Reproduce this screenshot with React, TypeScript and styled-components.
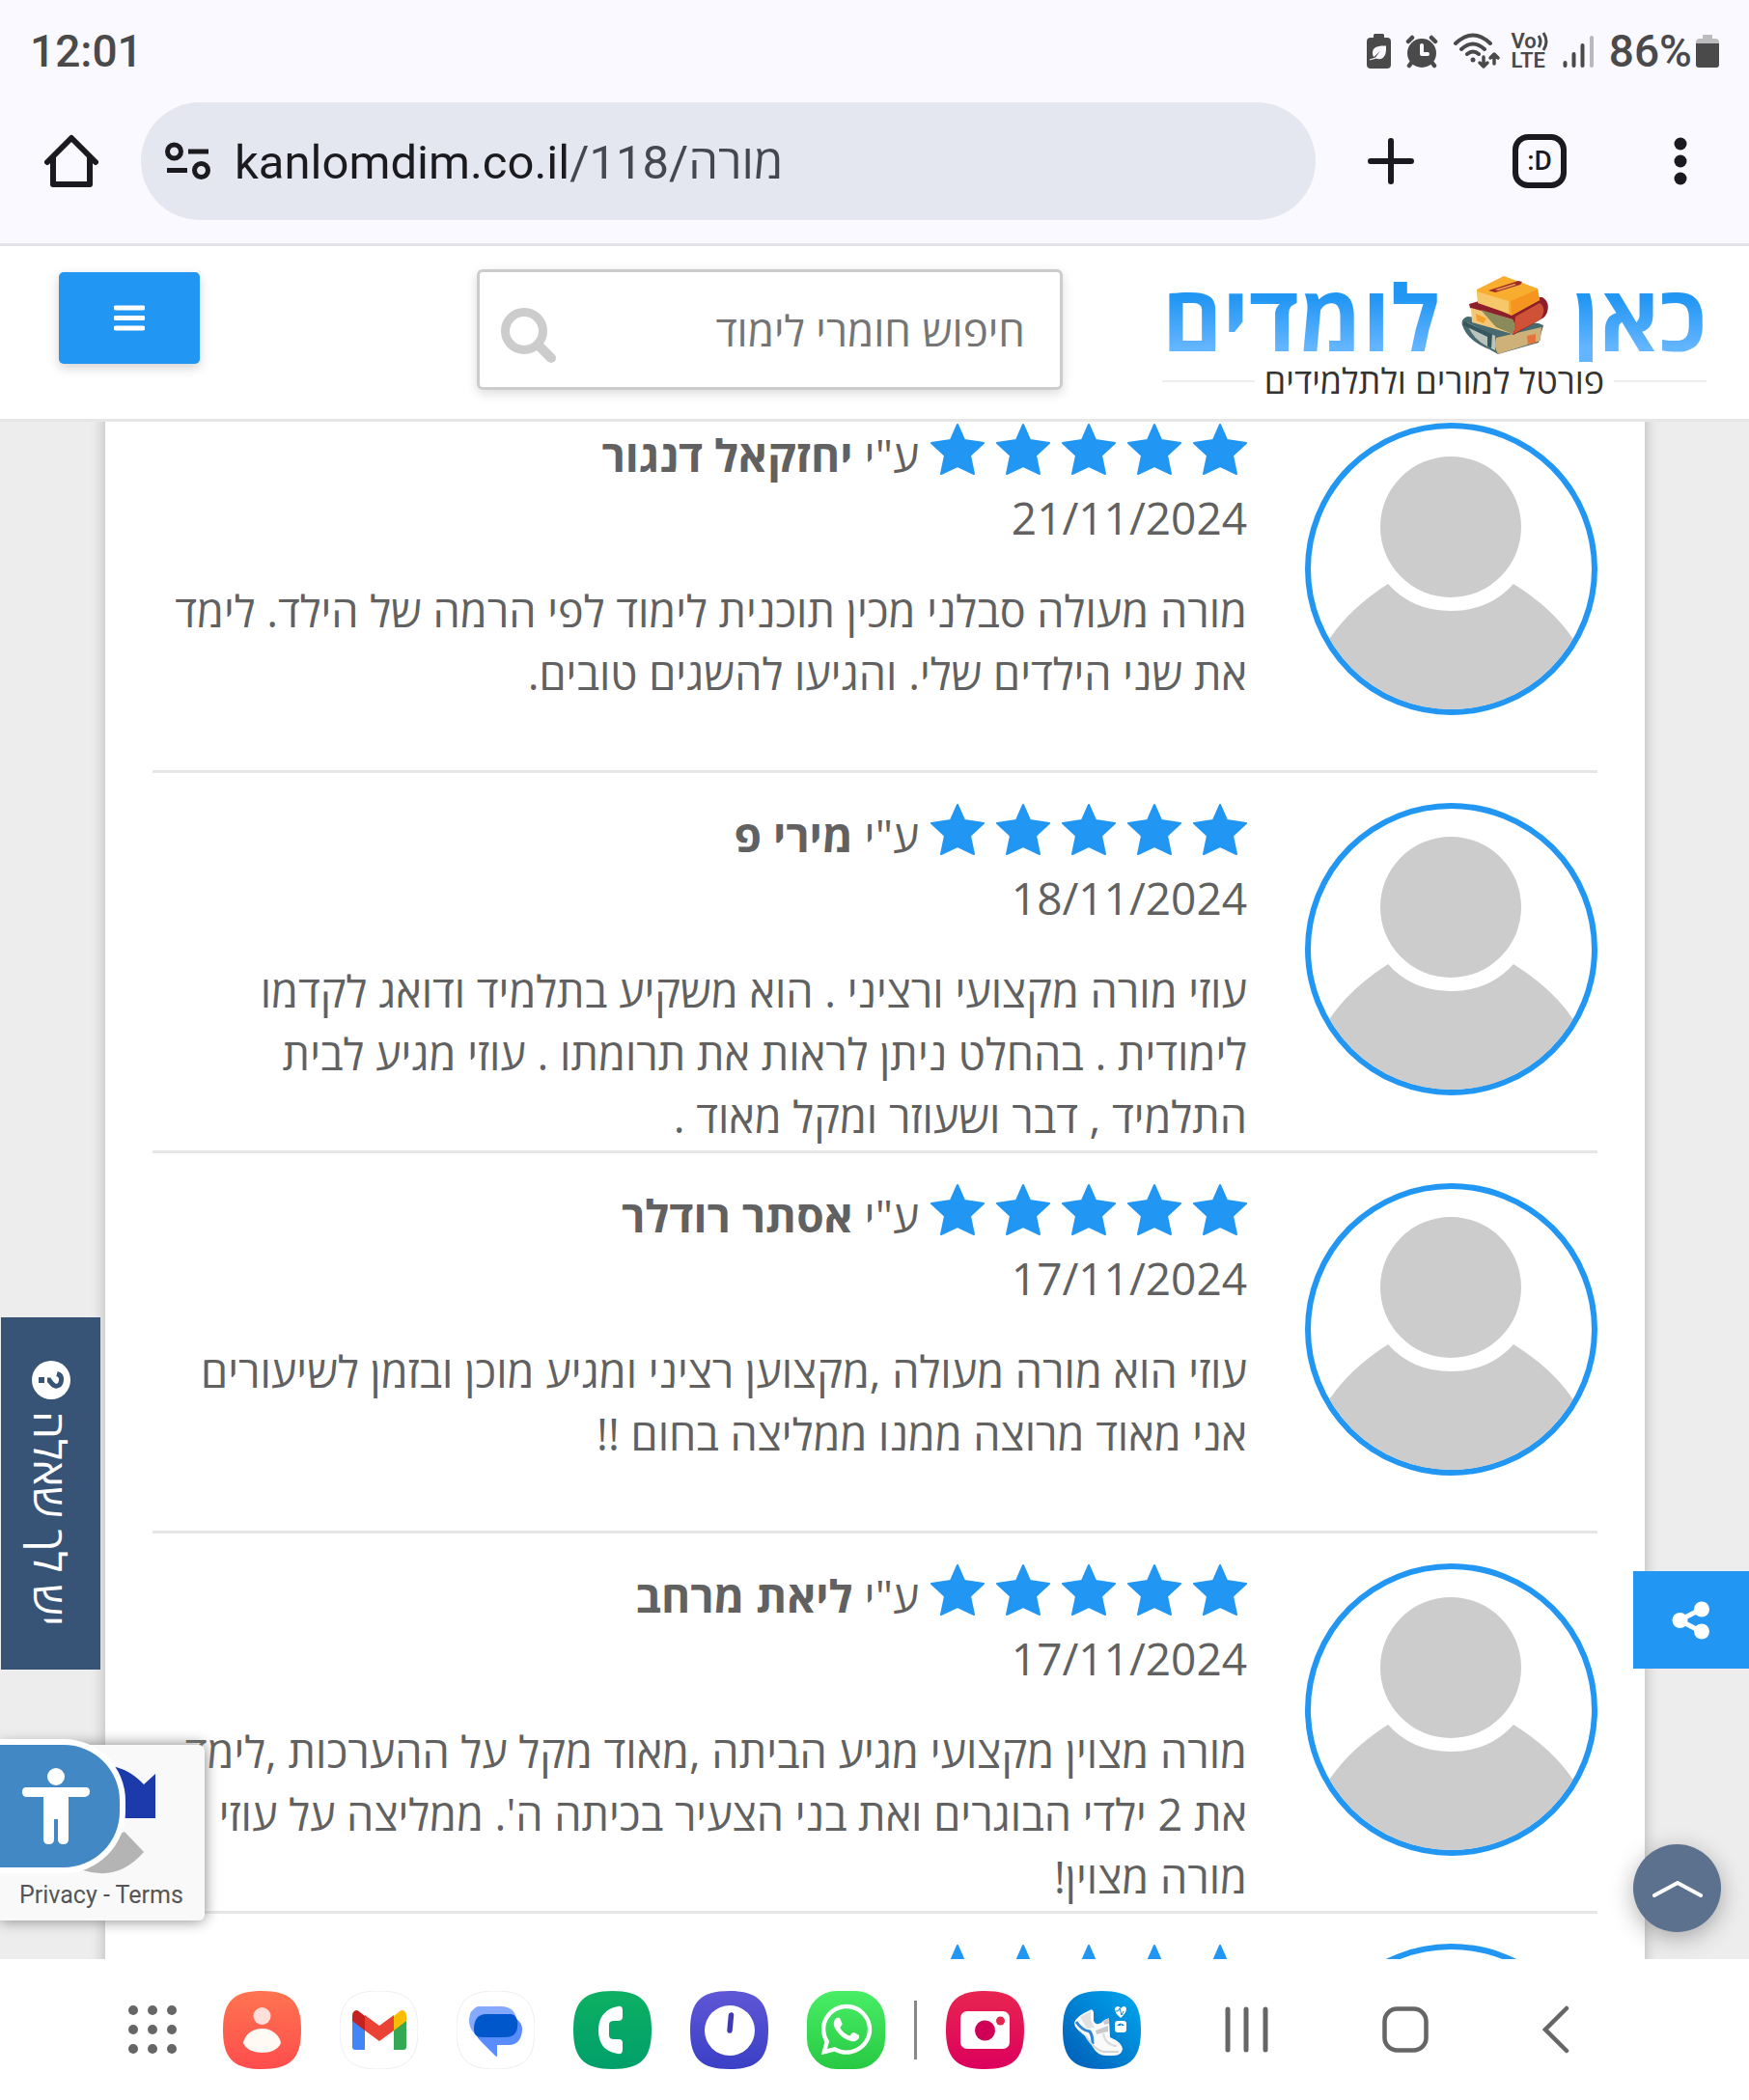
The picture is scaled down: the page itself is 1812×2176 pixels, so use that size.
import React from 'react'
import { FaWhatsapp } from 'react-icons/fa'
import styled, { createGlobalStyle } from 'styled-components'

const reviews = [
  {
    name: 'יחזקאל דנגור',
    date: '21/11/2024',
    text: 'מורה מעולה סבלני מכין תוכנית לימוד לפי הרמה של הילד. לימד את שני הילדים שלי. והגיעו להשגים טובים.',
  },
  {
    name: 'מירי פ',
    date: '18/11/2024',
    text: 'עוזי מורה מקצועי ורציני . הוא משקיע בתלמיד ודואג לקדמו לימודית . בהחלט ניתן לראות את תרומתו . עוזי מגיע לבית התלמיד , דבר ושעוזר ומקל מאוד .',
  },
  {
    name: 'אסתר רודלר',
    date: '17/11/2024',
    text: 'עוזי הוא מורה מעולה ,מקצוען רציני ומגיע מוכן ובזמן לשיעורים אני מאוד מרוצה ממנו ממליצה בחום !!',
  },
  {
    name: 'ליאת מרחב',
    date: '17/11/2024',
    text: "מורה מצוין מקצועי מגיע הביתה ,מאוד מקל על ההערכות ,לימד את 2 ילדי הבוגרים ואת בני הצעיר בכיתה ה'. ממליצה על עוזי מורה מצוין!",
  },
  { name: '', date: '', text: '' },
]

const tilePath =
  'M40.5 0C70 0 81 11 81 40.5S70 81 40.5 81 0 70 0 40.5 11 0 40.5 0Z'

function StatusBar() {
  return (
    <StatusRow>
      <StatusText>12:01</StatusText>
      <StatusIcons>
        <svg width="25" height="36" viewBox="0 0 25 36">
          <path
            fill="#4a4a4a"
            d="M7 4V1.500Q7 0 8.500 0H16.500Q18 0 18 1.500V4H21Q25 4 25 8V32Q25 36 21 36H4Q0 36 0 32V8Q0 4 4 4Z"
          />
          <path
            fill="#faf9ff"
            d="M20 12.500C11 12 6 14 6 20C6 22 6.500 23 7.500 24L14 17.500L9 24.500L3 26.500V27.500C9 26 9 25.500 11 26C18 27 20.500 22 20 12.500Z"
          />
        </svg>
        <svg width="34" height="36" viewBox="0 0 34 36">
          <circle cx="17" cy="20" r="15" fill="#4a4a4a" />
          <g stroke="#4a4a4a" strokeWidth="4.500" strokeLinecap="round">
            <path d="M3 8L7 4M27 4L31 8M7 29L4 33M27 29L30 33" />
          </g>
          <path
            d="M17 12V21H23"
            stroke="#faf9ff"
            strokeWidth="4"
            fill="none"
            strokeLinecap="round"
            strokeLinejoin="round"
          />
        </svg>
        <svg width="50" height="38" viewBox="0 0 50 38">
          <g
            stroke="#4a4a4a"
            strokeWidth="4"
            fill="none"
            strokeLinecap="round"
            strokeLinejoin="round"
          >
            <path d="M3 11Q21 -6 39 11M9 17Q21 6 33 17M15 22Q21 17 27 22" />
            <path
              strokeWidth="3.500"
              d="M32 25V35M28 31L32 35L36 31M43 32V22M39 26L43 22L47 26"
            />
          </g>
          <circle cx="21" cy="28" r="2.500" fill="#4a4a4a" />
        </svg>
        <Volte>
          <span>
            Vo
            <svg width="12" height="20" viewBox="0 0 12 20">
              <path
                d="M2 4Q6 10 2 16M7 1Q13 10 7 19"
                stroke="#4a4a4a"
                strokeWidth="3"
                fill="none"
              />
            </svg>
          </span>
          <span>LTE</span>
        </Volte>
        <svg width="33" height="36" viewBox="0 0 33 36">
          <g stroke="#4a4a4a" strokeWidth="4" strokeLinecap="round">
            <path d="M2.500 30V33M11.500 21V33M20.500 12V33" />
            <path d="M30 4V33" stroke="#b9b9bd" />
          </g>
        </svg>
        <BatteryGroup>
          <StatusText>86%</StatusText>
          <svg width="24" height="36" viewBox="0 0 24 36">
            <path fill="#bcbcbf" d="M7 5V2Q7 1 8 1H16Q17 1 17 2V5H20Q24 5 24 9V11H0V9Q0 5 4 5Z" />
            <path fill="#4a4a4a" d="M0 10H24V32Q24 35 21 35H3Q0 35 0 32Z" />
          </svg>
        </BatteryGroup>
      </StatusIcons>
    </StatusRow>
  )
}

function BrowserBar() {
  return (
    <BrowserRow>
      <IconButton aria-label="Home">
        <svg width="56" height="56" viewBox="0 0 56 56">
          <path
            d="M3 29L28 4L53 29M9 24V52H47V24"
            fill="none"
            stroke="#1b1b1f"
            strokeWidth="6"
            strokeLinejoin="round"
            strokeLinecap="round"
          />
        </svg>
      </IconButton>
      <UrlBar>
        <svg width="48" height="40" viewBox="0 0 48 40">
          <g fill="none" stroke="#1b1b1f" strokeWidth="5">
            <circle cx="9.500" cy="10" r="7" />
            <circle cx="37.500" cy="29.500" r="7" />
            <path d="M24 10H45M2 29.500H23" />
          </g>
        </svg>
        <UrlText href="#">
          kanlomdim.co.il<UrlPath>/118/מורה</UrlPath>
        </UrlText>
      </UrlBar>
      <IconButton aria-label="New tab">
        <svg width="48" height="48" viewBox="0 0 48 48">
          <path
            d="M24 3V45M3 24H45"
            stroke="#1b1b1f"
            strokeWidth="6"
            strokeLinecap="round"
          />
        </svg>
      </IconButton>
      <TabSwitch aria-label="Tabs">:D</TabSwitch>
      <IconButton aria-label="Menu">
        <svg width="14" height="50" viewBox="0 0 14 50">
          <circle cx="7" cy="7" r="6.500" fill="#1b1b1f" />
          <circle cx="7" cy="25" r="6.500" fill="#1b1b1f" />
          <circle cx="7" cy="43" r="6.500" fill="#1b1b1f" />
        </svg>
      </IconButton>
    </BrowserRow>
  )
}

function Books() {
  return (
    <svg width="98" height="86" viewBox="16 7 98 86">
      <path fill="#47696f" d="M19 60Q17 54 24 51L98 58L103 60L98 78L56 90L47 85Q24 76 19 60Z" />
      <path fill="#b9c4bd" d="M24 57L53 71V86Q28 76 24 57Z" />
      <path fill="#35565c" d="M21 56L50 69L49 84L45 82V72L20 60Z" />
      <path fill="#cdb178" d="M54 73L101 62L100 76L56 90Q51 82 54 73Z" />
      <path fill="#e5743b" d="M86 71L95 69V78L87 80Z" />
      <path fill="#8c1f2b" d="M26 38L52 30L102 31Q110 36 107 46Q106 51 100 54L72 70L27 42Z" />
      <path fill="#cf5236" d="M74 51L99 37Q107 42 100 54L72 69Z" />
      <path fill="#f3c778" d="M28 42L71 54Q75 60 71 69L29 57Z" />
      <path fill="#8b8a5a" d="M38 44L71 54Q75 60 71 69L54 62Z" />
      <path fill="#f6a02c" d="M33 48L44 53L41 58L34 55Z" />
      <path fill="#f8ad2f" d="M34 23L62 9L97 22L99 34L70 50L35 34Z" />
      <path fill="#f6c869" d="M34 25L67 35V48L35 37Z" />
      <path fill="#f5941f" d="M69 35L97 23L99 34L70 49Z" />
      <path fill="#9e2b28" d="M46 24L77 14L81 15L79 18L53 26Z" />
      <path fill="#e89a55" d="M53 23L73 17L75 18L56 24Z" />
    </svg>
  )
}

function SiteHeader() {
  return (
    <HeaderRow>
      <MenuButton aria-label="תפריט">
        <svg width="32" height="27" viewBox="0 0 32 27">
          <path d="M2 3H30M2 13.500H30M2 24H30" stroke="#fff" strokeWidth="5" strokeLinecap="round" />
        </svg>
      </MenuButton>
      <SearchBox>
        <svg width="58" height="58" viewBox="0 0 58 58">
          <circle cx="24" cy="24" r="19.500" fill="none" stroke="#ccc" strokeWidth="9" />
          <path d="M40 40L52 52" stroke="#ccc" strokeWidth="10" strokeLinecap="round" />
        </svg>
        <SearchInput dir="rtl" aria-label="חיפוש" placeholder="חיפוש חומרי לימוד" />
      </SearchBox>
      <Logo href="#">
        <LogoWords dir="rtl">
          <LogoWord>כאן</LogoWord>
          <Books />
          <LogoWord>לומדים</LogoWord>
        </LogoWords>
        <Tagline>
          <span>פורטל למורים ולתלמידים</span>
        </Tagline>
      </Logo>
    </HeaderRow>
  )
}

function Avatar() {
  return (
    <AvatarRing>
      <svg width="100%" height="100%" viewBox="0 0 291 291">
        <circle cx="145" cy="102" r="73" fill="#ccc" />
        <path
          fill="#ccc"
          d="M80 161Q105 189 145 189Q185 189 210 161Q250 186 271 217Q282 235 291 260V291H0V260Q8 235 20 217Q41 186 80 161Z"
        />
      </svg>
    </AvatarRing>
  )
}

function Stars() {
  return (
    <StarRow>
      {[1, 2, 3, 4, 5].map((n) => (
        <svg key={n} width="56" height="54" viewBox="0 0 56 54">
          <path
            fill="#2196f3"
            stroke="#2196f3"
            strokeWidth="2"
            strokeLinejoin="round"
            d="M28 2L35 18L55 21L41 34L45 53L28 45L11 53L15 34L1 21L21 18Z"
          />
        </svg>
      ))}
    </StarRow>
  )
}

function Review({ name, date, text }: { name: string; date: string; text: string }) {
  return (
    <ReviewRow>
      <Avatar />
      <ReviewBody>
        <Stars />
        {name && (
          <>
            {' '}
            ע"י <b>{name}</b>
            <div>{date}</div>
            <ReviewText>{text}</ReviewText>
          </>
        )}
      </ReviewBody>
    </ReviewRow>
  )
}

function Floating() {
  return (
    <>
      <AskTab>
        יש לך שאלה
        <svg width="40" height="40" viewBox="0 0 40 40">
          <circle cx="20" cy="20" r="20" fill="#fff" />
          <g transform="rotate(90 20 20)">
            <path
              d="M13.500 14Q15 9 20 9.500Q27 10 26 16Q25 19 20 22V24"
              fill="none"
              stroke="#375375"
              strokeWidth="5"
            />
            <rect x="17" y="27" width="6" height="6" fill="#375375" />
          </g>
        </svg>
      </AskTab>
      <Captcha>
        <svg width="120" height="96" viewBox="0 0 120 96">
          <path fill="#1c3aa9" d="M50 8Q85 4 107 28L119 17V63H50Z" />
          <path fill="#b4b4b4" d="M87 77L107 98Q72 138 22 106Z" />
        </svg>
        <CaptchaLinks>
          <a href="#">Privacy</a> - <a href="#">Terms</a>
        </CaptchaLinks>
      </Captcha>
      <AccessButton aria-label="נגישות">
        <svg width="70" height="80" viewBox="0 0 70 80">
          <circle cx="35" cy="9" r="9" fill="#fff" />
          <path
            fill="#fff"
            d="M4 20H66Q70 20 70 24.500T65 30H48V74Q48 79 42.500 79T37 74V53H33V74Q33 79 27.500 79T22 74V30H5Q0 30 0 25T4 20Z"
          />
        </svg>
      </AccessButton>
      <ShareButton aria-label="שיתוף">
        <svg width="40" height="40" viewBox="0 0 40 40">
          <path d="M31 8L8 20L31 32" fill="none" stroke="#fff" strokeWidth="5" />
          <circle cx="31" cy="8.500" r="8" fill="#fff" />
          <circle cx="8.500" cy="20" r="8" fill="#fff" />
          <circle cx="31" cy="31.500" r="8" fill="#fff" />
        </svg>
      </ShareButton>
      <TopButton aria-label="למעלה">
        <svg width="52" height="18" viewBox="0 0 52 18">
          <path
            d="M2 16L26 3L50 16"
            fill="none"
            stroke="#fff"
            strokeWidth="4"
            strokeLinecap="round"
          />
        </svg>
      </TopButton>
    </>
  )
}

function Dock() {
  return (
    <DockRow>
      <Apps>
        <DockButton aria-label="Apps">
          <svg width="58" height="50" viewBox="0 0 58 50">
            {[5, 25, 45].map((x) =>
              [5, 25, 45].map((y) => (
                <circle key={`${x}-${y}`} cx={x} cy={y} r="5" fill="#666" />
              )),
            )}
          </svg>
        </DockButton>
        <DockButton aria-label="Contacts">
          <svg width="81" height="81" viewBox="0 0 81 81">
            <defs>
              <linearGradient id="contacts" x2="0" y2="1">
                <stop stopColor="#ff7450" />
                <stop offset="1" stopColor="#ff4d4d" />
              </linearGradient>
            </defs>
            <path d={tilePath} fill="url(#contacts)" />
            <circle cx="40.500" cy="26" r="9" fill="#ffdfd9" />
            <path fill="#fffaf3" d="M40.500 39C52 39 59 47 60 54C57 61 49 64 40.500 64S24 61 21 54C22 47 29 39 40.500 39Z" />
          </svg>
        </DockButton>
        <DockButton aria-label="Gmail">
          <svg width="81" height="81" viewBox="0 0 81 81">
            <path d={tilePath} fill="#fff" stroke="#eee" />
            <path fill="#4285f4" d="M13 30L26 38V61H16Q13 61 13 58Z" />
            <path fill="#34a853" d="M56 38L69 30V58Q69 61 66 61H56Z" />
            <path fill="#fbbc04" d="M56 26L61 22Q65 18 68 22Q69 23 69 26V31L56 41Z" />
            <path fill="#c5221f" d="M26 26L21 22Q17 18 14 22Q13 23 13 26V31L26 41Z" />
            <path fill="#ea4335" d="M26 25L41 36L56 25V41L41 52L26 41Z" />
          </svg>
        </DockButton>
        <DockButton aria-label="Messages">
          <svg width="81" height="81" viewBox="0 0 81 81">
            <path d={tilePath} fill="#fff" stroke="#eee" />
            <path fill="#84a9ff" d="M22 16H46Q62 16 63 34L58 48H30Q13 46 13 30Q13 20 22 16Z" />
            <path fill="#588cff" d="M62 29Q68 33 68 40Q67 56 54 56H42V67Q42 69 40 67L26 53Q18 46 18 36L30 24H50Z" />
            <path fill="#0057cc" d="M31 24H56Q61 24 63 31Q65 48 50 48H26Q18 48 18 40Q18 24 31 24Z" />
          </svg>
        </DockButton>
        <DockButton aria-label="Phone">
          <svg width="81" height="81" viewBox="0 0 81 81">
            <defs>
              <linearGradient id="phone" x2="0" y2="1">
                <stop stopColor="#0db062" />
                <stop offset="1" stopColor="#009f6b" />
              </linearGradient>
            </defs>
            <path d={tilePath} fill="url(#phone)" />
            <path
              fill="#fff"
              d="M46 16Q51 15 51 20V27Q51 31 46 31H42Q37 31 37 35V46Q37 50 42 50H47Q51 50 51 54V61Q51 66 46 65Q26 62 26 41T46 16Z"
            />
          </svg>
        </DockButton>
        <DockButton aria-label="Clock">
          <svg width="81" height="81" viewBox="0 0 81 81">
            <defs>
              <linearGradient id="clock" x2="0" y2="1">
                <stop stopColor="#5f57d6" />
                <stop offset="1" stopColor="#3a3fc5" />
              </linearGradient>
            </defs>
            <path d={tilePath} fill="url(#clock)" />
            <circle cx="41" cy="41" r="26" fill="#fff" />
            <path d="M42.500 25L41 41" stroke="#4239b4" strokeWidth="5.500" strokeLinecap="round" />
          </svg>
        </DockButton>
        <WhatsappButton aria-label="WhatsApp">
          <FaWhatsapp size={60} color="#fff" />
        </WhatsappButton>
      </Apps>
      <Separator />
      <Recent>
        <DockButton aria-label="Camera">
          <svg width="81" height="81" viewBox="0 0 81 81">
            <defs>
              <linearGradient id="camera" x2="0" y2="1">
                <stop stopColor="#e82551" />
                <stop offset="1" stopColor="#dc005d" />
              </linearGradient>
            </defs>
            <path d={tilePath} fill="url(#camera)" />
            <rect x="15" y="21" width="51" height="39" rx="7" fill="#fff" />
            <circle cx="40.500" cy="41" r="10.500" fill="#cf0055" />
            <circle cx="56.500" cy="31" r="4.500" fill="#e3264d" />
          </svg>
        </DockButton>
        <DockButton aria-label="Health">
          <svg width="81" height="81" viewBox="0 0 81 81">
            <defs>
              <linearGradient id="health" x1="1" x2="0" y2="1">
                <stop stopColor="#00a8f0" />
                <stop offset="1" stopColor="#005bb5" />
              </linearGradient>
            </defs>
            <path d={tilePath} fill="url(#health)" />
            <path fill="#fafafa" d="M28 20Q31 18 32 22V31Q34 36 40 33Q45 28 48 29L49 48Q61 53 62 60Q61 67 53 67H45Q36 67 31 58Q28 50 20 44Q12 38 12 33Q14 26 28 20Z" />
            <path fill="#e1e1e1" d="M18 27L29 21V30L33 38L25 39Z" />
            <path fill="#c9c9cc" d="M34 41L47 36V42L35 45ZM42 31L48 28V34L43 35Z" />
            <path d="M14 32Q20 41 28 42Q31 46 31 55" fill="none" stroke="#2f86d6" strokeWidth="3" />
            <path d="M24 47Q33 61 42 63H58" fill="none" stroke="#d5d5d8" strokeWidth="2" />
            <path d="M42 44Q44 56 56 57" fill="none" stroke="#dcdcdf" strokeWidth="2" />
            <path fill="#fff" d="M60 28Q53 22 54 18Q57 14 60 18Q64 14 66 18Q66 23 60 28Z" />
            <path d="M54 21H57L59 18L61 25L63 21" fill="none" stroke="#0d86d8" />
            <rect x="54" y="31" width="12" height="12" rx="3" fill="#fff" />
            <path d="M56 36Q60 31 64 36H61L60 34V36Z" fill="#0d86d8" />
          </svg>
        </DockButton>
      </Recent>
      <SystemKeys>
        <DockButton aria-label="Recents">
          <svg width="45" height="48" viewBox="0 0 45 48">
            <path d="M3 3V45M22 3V45M42 3V45" stroke="#666" strokeWidth="5" strokeLinecap="round" />
          </svg>
        </DockButton>
        <DockButton aria-label="Home screen">
          <svg width="48" height="48" viewBox="0 0 48 48">
            <rect x="2.500" y="2.500" width="43" height="43" rx="13" fill="none" stroke="#666" strokeWidth="4.500" />
          </svg>
        </DockButton>
        <DockButton aria-label="Back">
          <svg width="28" height="50" viewBox="0 0 28 50">
            <path d="M25 3L3 25L25 47" fill="none" stroke="#666" strokeWidth="4.500" strokeLinecap="round" />
          </svg>
        </DockButton>
      </SystemKeys>
    </DockRow>
  )
}

export default function App() {
  return (
    <Screen>
      <GlobalStyle />
      <Chrome>
        <StatusBar />
        <BrowserBar />
      </Chrome>
      <SiteHeader />
      <Viewport>
        <Sheet dir="rtl">
          <ReviewList>
            {reviews.map((r, i) => (
              <Review key={i} {...r} />
            ))}
          </ReviewList>
        </Sheet>
        <Floating />
      </Viewport>
      <Dock />
    </Screen>
  )
}

const GlobalStyle = createGlobalStyle`
  * {
    box-sizing: border-box;
  }
  body {
    margin: 0;
    font-family: "Open Sans", "Noto Sans", sans-serif;
  }
  button {
    padding: 0;
    border: 0;
    background: none;
    font-family: inherit;
  }
  svg {
    display: block;
    flex: none;
  }
  a {
    color: inherit;
    text-decoration: none;
  }
`

const Screen = styled.div`
  display: flex;
  flex-direction: column;
  height: 100vh;
  background: #fff;
`

const Chrome = styled.header`
  background: #faf9ff;
  border-bottom: 3px solid #e2e2ea;
  padding-bottom: 24px;
`

const StatusRow = styled.div`
  display: flex;
  align-items: center;
  justify-content: space-between;
  height: 106px;
  padding: 0 31px;
`

const StatusText = styled.span`
  font: 500 46px/54px Roboto, sans-serif;
  color: #4a4a4a;
`

const StatusIcons = styled.div`
  display: flex;
  align-items: center;
  gap: 15px;
`

const BatteryGroup = styled.div`
  display: flex;
  align-items: center;
  gap: 4px;
`

const Volte = styled.div`
  display: flex;
  flex-direction: column;
  margin-left: -4px;
  font: 600 22px/20px Roboto, sans-serif;
  color: #4a4a4a;

  span {
    display: flex;
  }
`

const BrowserRow = styled.div`
  display: flex;
  align-items: center;
  height: 122px;
  padding: 0 64px 0 46px;
`

const IconButton = styled.button`
  display: flex;
`

const UrlBar = styled.div`
  display: flex;
  align-items: center;
  flex: 1;
  gap: 24px;
  height: 122px;
  margin: 0 54px 0 44px;
  padding: 0 25px;
  border-radius: 61px;
  background: #e4e7f0;
`

const UrlText = styled.a`
  padding-top: 4px;
  font: 49px/64px Roboto, "Open Sans", sans-serif;
  color: #1b1b1f;
`

const UrlPath = styled.span`
  color: #44474f;
`

const TabSwitch = styled.button`
  width: 56px;
  height: 56px;
  margin: 0 111px 0 102px;
  border: 6px solid #1b1b1f;
  border-radius: 16px;
  color: #1b1b1f;
  font: 500 28px/40px Roboto, sans-serif;
`

const HeaderRow = styled.div`
  display: flex;
  align-items: flex-start;
  height: 182px;
  padding: 24px 44px 0 61px;
  border-bottom: 3px solid #e6e6e6;
  background: #fff;
`

const MenuButton = styled.button`
  display: flex;
  align-items: center;
  justify-content: center;
  width: 146px;
  height: 95px;
  margin-top: 3px;
  border-radius: 5px;
  background: #2196f3;
  box-shadow: 0 4px 12px rgba(0, 0, 0, 0.18);
`

const SearchBox = styled.label`
  display: flex;
  align-items: center;
  width: 607px;
  height: 125px;
  margin-left: auto;
  padding: 0 36px 0 22px;
  border: 3px solid #ccc;
  border-radius: 6px;
  box-shadow: 0 4px 12px rgba(0, 0, 0, 0.14);

  svg {
    margin-top: 12px;
  }
`

const SearchInput = styled.input`
  flex: 1;
  min-width: 0;
  padding: 0;
  border: 0;
  outline: 0;
  background: none;
  font: 44px/64px "Open Sans", sans-serif;

  &::placeholder {
    color: #757575;
    opacity: 1;
  }
`

const Logo = styled.a`
  width: 564px;
  margin-left: 103px;
`

const LogoWords = styled.div`
  display: flex;
  align-items: center;
  justify-content: space-between;
  height: 96px;
`

const LogoWord = styled.span`
  font: 700 95px/96px "Open Sans", sans-serif;
  color: transparent;
  background: linear-gradient(#2196f3 30%, #64b5ff 85%);
  background-clip: text;
`

const Tagline = styled.div`
  display: flex;
  align-items: center;
  gap: 10px;
  color: #333;
  font: 36px/40px "Open Sans", sans-serif;

  &::before,
  &::after {
    content: '';
    flex: 1;
    height: 2px;
    background: #eee;
  }
`

const Viewport = styled.main`
  position: relative;
  flex: 1;
  min-height: 0;
  overflow: hidden;
  padding: 0 108px 0 109px;
  background: #ededed;
`

const Sheet = styled.div`
  min-height: 100%;
  padding: 0 49px;
  background: #fff;
  box-shadow: 0 0 14px rgba(0, 0, 0, 0.25);
`

const ReviewList = styled.div`
  margin-top: -30px;
`

const ReviewRow = styled.article`
  display: flex;
  gap: 60px;
  min-height: 394px;
  padding-top: 31px;
  border-bottom: 3px solid #e6e6e6;
`

const AvatarRing = styled.div`
  flex: none;
  width: 303px;
  height: 303px;
  border: 6px solid #2196f3;
  border-radius: 50%;
  overflow: hidden;
`

const ReviewBody = styled.div`
  flex: 1;
  color: #616161;
  font-size: 46px;
  line-height: 65px;
`

const StarRow = styled.span`
  display: inline-flex;
  gap: 12px;
  vertical-align: -3px;
`

const ReviewText = styled.p`
  margin: 31px 0 0;
  font-size: 45px;
`

const AskTab = styled.button`
  position: absolute;
  left: 1px;
  bottom: 300px;
  display: flex;
  align-items: center;
  justify-content: center;
  gap: 12px;
  width: 103px;
  height: 365px;
  background: #375375;
  color: #fff;
  direction: rtl;
  writing-mode: vertical-rl;
  font-size: 46px;
  line-height: 64px;
`

const Captcha = styled.div`
  position: absolute;
  left: 0;
  bottom: 40px;
  width: 212px;
  height: 182px;
  padding: 13px 20px 0;
  border-radius: 0 6px 6px 0;
  background: #f9f9f9;
  box-shadow: 0 0 15px #808080;

  svg {
    margin-left: 22px;
    overflow: visible;
  }
`

const CaptchaLinks = styled.div`
  margin-top: 32px;
  font: 25px/30px Roboto, sans-serif;
  color: #555;
  white-space: nowrap;
`

const AccessButton = styled.button`
  position: absolute;
  left: 0;
  bottom: 89px;
  display: flex;
  align-items: center;
  width: 130px;
  height: 139px;
  padding-left: 23px;
  border: 6px solid #fff;
  border-left: 0;
  border-radius: 0 64px 64px 0;
  background: #4288c5;
`

const ShareButton = styled.button`
  position: absolute;
  right: 0;
  bottom: 301px;
  display: flex;
  align-items: center;
  justify-content: center;
  width: 120px;
  height: 101px;
  background: #2196f3;
`

const TopButton = styled.button`
  position: absolute;
  right: 29px;
  bottom: 28px;
  display: flex;
  align-items: center;
  justify-content: center;
  width: 91px;
  height: 91px;
  border-radius: 50%;
  background: #5b718e;
  box-shadow: 0 6px 24px rgba(0, 0, 0, 0.3);
`

const DockRow = styled.nav`
  display: flex;
  align-items: center;
  height: 146px;
  padding: 0 186px 0 133px;
  background: #fff;
`

const Apps = styled.div`
  display: flex;
  align-items: center;
  gap: 40px;
`

const Recent = styled(Apps)``

const SystemKeys = styled.div`
  display: flex;
  align-items: center;
  gap: 118px;
  margin-left: auto;
`

const DockButton = styled.button`
  display: flex;
`

const WhatsappButton = styled(DockButton)`
  align-items: center;
  justify-content: center;
  width: 81px;
  height: 81px;
  border-radius: 31px;
  background: linear-gradient(#48ee66, #28c942);
`

const Separator = styled.div`
  width: 3px;
  height: 61px;
  margin: 0 30px;
  background: #888;
`
